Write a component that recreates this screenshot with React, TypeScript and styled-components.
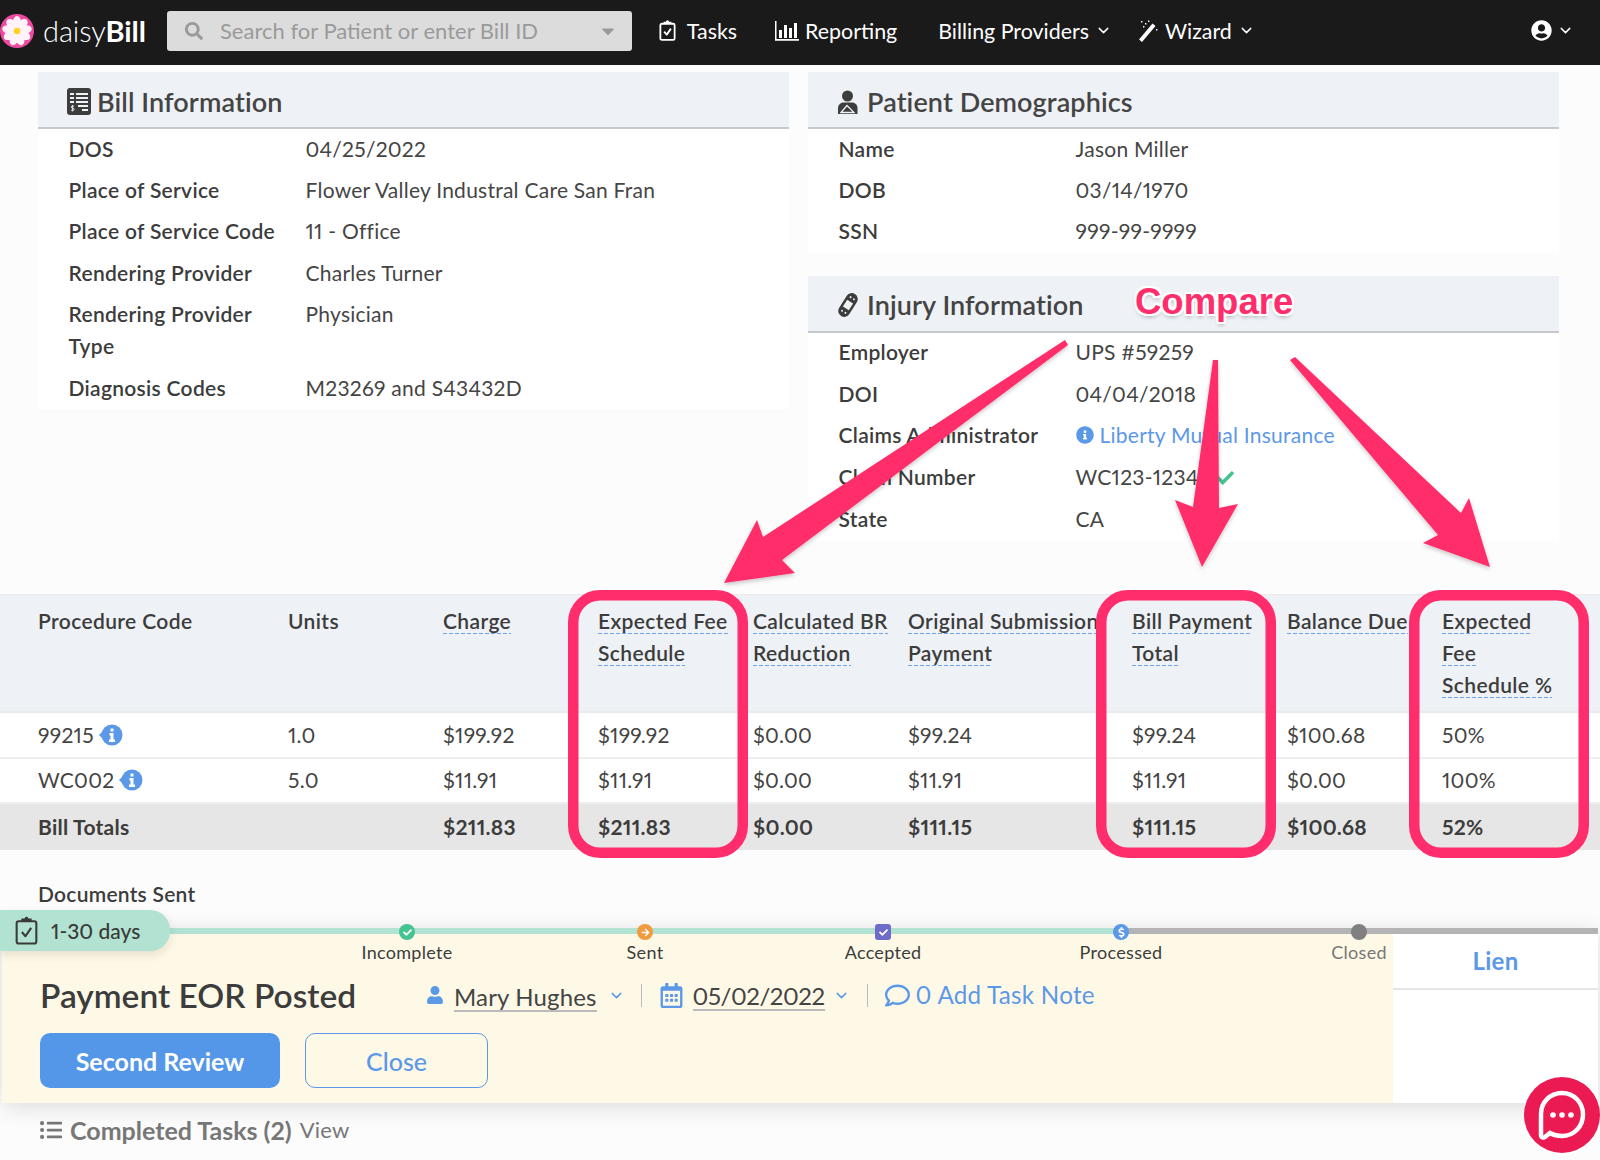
import React from "react";
import styled, { createGlobalStyle } from "styled-components";
import {
  FaInfoCircle, FaCheck, FaUser, FaRegCalendarAlt, FaRegComment, FaListUl, FaSearch,
  FaDollarSign, FaArrowRight, FaUserCircle, FaCaretDown,
} from "react-icons/fa";
import { ChevronDown } from "lucide-react";

const Font = `Lato, "Open Sans", Arial, sans-serif`;
const Pink = "#ff2d6b";
const Blue = "#5b98e8";

const Global = createGlobalStyle`
  html, body { margin: 0; padding: 0; background: #fcfcfc; }
  body { font-family: ${Font}; color: #444; font-variant-numeric: proportional-nums; font-feature-settings: "pnum" 1; }
  * { box-sizing: border-box; }
`;

const Page = styled.div`
  position: relative; width: 1600px; height: 1160px; overflow: hidden; background: #fcfcfc;
  font-size: 21px; line-height: 32px; letter-spacing: .25px;
`;

/* ---------- nav ---------- */
const Nav = styled.header`
  height: 65px; background: #1a1a1a; display: flex; align-items: center; color: #fff; padding-bottom: 3px;
`;
const Brand = styled.div`display: flex; align-items: center; width: 167px; flex: none; gap: 9px; font-size: 29px; letter-spacing: -.1px;`;
const BrandLight = styled.span`font-weight: 300;`;
const BrandBold = styled.span`font-weight: 700;`;
const Search = styled.div`
  width: 465px; height: 40px; background: #dcdcdc; border-radius: 3px; display: flex; align-items: center;
  padding: 0 14px 0 18px; color: #9a9a9a; font-size: 22px; flex: none; letter-spacing: 0;
`;
const SearchText = styled.span`flex: 1; margin-left: 17px;`;
const NavItem = styled.div<{ $left: number }>`
  display: flex; align-items: center; gap: 6px; margin-left: ${p => p.$left}px; font-size: 21.4px; white-space: nowrap; letter-spacing: 0; padding-bottom: 1px;
`;

/* ---------- info panels ---------- */
const InfoGrid = styled.div`
  display: grid; grid-template-columns: 751px 751px; gap: 19px; padding: 7px 0 0 38px; height: 529px; align-items: start;
`;
const Column = styled.div`display: flex; flex-direction: column; gap: 22.5px;`;
const Panel = styled.section`background: #fff;`;
const PanelHead = styled.h2`
  height: 57px; margin: 0; background: #eef1f5; border-bottom: 2px solid #c6c9cc; padding: 4px 0 0 29px;
  display: flex; align-items: center; gap: 6px; font-size: 27px; font-weight: 600; color: #444; letter-spacing: .1px;
`;
const InfoRow = styled.div`display: grid; grid-template-columns: 237px 1fr; padding: 3.7px 0 5.7px 30.5px;`;
const Label = styled.div`font-weight: 600; color: #3c3c3c; padding-right: 12px; letter-spacing: .3px;`;
const Value = styled.div`color: #454545;`;
const LinkValue = styled.a`color: ${Blue}; display: inline-flex; align-items: center; gap: 6px;`;

/* ---------- table ---------- */
const cols = "288px 155px 155px 155px 155px 224px 155px 155px 158px";
const TableHead = styled.div`
  display: grid; grid-template-columns: ${cols}; height: 119px; background: #eef1f5;
  padding-top: 10px; border-bottom: 2px solid #e8eaec; border-top: 1px solid #e8e8e8; font-weight: 600; color: #3c3c3c; letter-spacing: .38px;
`;
const HeadCell = styled.div<{ $w?: number }>`
  padding-right: 12px; max-width: ${p => p.$w ?? 155}px; white-space: normal;
  &:first-child { padding-left: 38px; max-width: none; }
  &:last-child { max-width: 126px; padding-right: 0; }
`;
const Dashed = styled.span`
  padding-bottom: 1px; -webkit-box-decoration-break: clone; box-decoration-break: clone;
  background: linear-gradient(to right, #6fa3ea 4px, transparent 4px) 0 100% / 6px 1.5px repeat-x;
`;
const BodyRow = styled.div<{ $total?: boolean }>`
  display: grid; grid-template-columns: ${cols}; height: ${p => (p.$total ? 46 : 45.5)}px; align-items: center;
  background: ${p => (p.$total ? "#e6e6e6" : "#fff")}; font-weight: ${p => (p.$total ? 700 : 400)};
  border-bottom: ${p => (p.$total ? "none" : "2px solid #eeeeee")}; color: ${p => (p.$total ? "#3c3c3c" : "#444")};
`;
const BodyCell = styled.div`
  display: flex; align-items: center; gap: 5px;
  &:first-child { padding-left: 38px; }
`;

/* ---------- docs + timeline ---------- */
const Docs = styled.div`padding: 28px 0 0 38px; height: 78px; font-weight: 600; color: #3c3c3c;`;
const Card = styled.section`
  position: relative; width: 1596px; margin-left: 2px; box-shadow: 0 4px 22px rgba(0,0,0,.13); background: #fff;
`;
const Track = styled.div`display: flex; height: 6px; background: #b4b4b4;`;
const TrackDone = styled.div`width: 1120px; background: #b2e2d1;`;
const AgeBadge = styled.div`
  position: absolute; left: -2px; top: -18px; width: 170px; height: 41px; background: #b2e2d1; z-index: 3;
  border-radius: 0 20px 20px 0; display: flex; align-items: center; gap: 13px; padding-left: 15px; color: #3a3a3a;
  font-weight: 500; box-shadow: 0 4px 10px rgba(0,0,0,.1); letter-spacing: 0;
`;
const CardBody = styled.div`display: flex; height: 169px;`;
const Yellow = styled.div`width: 1391px; flex: none; background: #fef9e6; padding: 0 0 0 38px;`;
const Steps = styled.div`display: flex; margin: -10px 0 0 248px;`;
const Step = styled.div<{ $muted?: boolean }>`
  width: 238px; flex: none; display: flex; flex-direction: column; align-items: center; font-size: 18px; line-height: 24px;
  color: ${p => (p.$muted ? "#777" : "#3c3c3c")}; position: relative; z-index: 2; letter-spacing: .3px;
`;
const Node = styled.div<{ $c: string; $square?: boolean }>`
  width: 16px; height: 16px; border-radius: ${p => (p.$square ? "3px" : "50%")}; background: ${p => p.$c};
  display: flex; align-items: center; justify-content: center; color: #fff; font-size: 9px;
`;
const TitleRow = styled.div`display: flex; align-items: center; height: 40px; margin-top: 11px;`;
const Title = styled.h1`margin: 0; font-size: 33.5px; font-weight: 600; color: #3c3c3c; width: 386px; flex: none; letter-spacing: 0;`;
const Owner = styled.span`
  font-size: 24px; color: #444; border-bottom: 2px solid #bbb; line-height: 27px; margin: 4px 11px 0 10px; letter-spacing: .15px;
`;
const DateText = styled(Owner)`letter-spacing: -.45px; margin: 3px 8px 0 9px;`;
const Divider = styled.span<{ $after?: number }>`
  width: 1px; height: 23px; background: #bbb; margin: 0 17px 0 ${p => p.$after ?? 16}px;
`;
const Note = styled.span`font-size: 24.2px; color: ${Blue}; margin-left: 6px;`;
const ButtonRow = styled.div`display: flex; gap: 25px; margin-top: 18px;`;
const Primary = styled.button`
  width: 240px; height: 55px; border: 0; border-radius: 10px; background: #5497e8; color: #fff;
  font: 700 25px ${Font};
`;
const Secondary = styled.button`
  width: 183px; height: 55px; border: 1.5px solid ${Blue}; border-radius: 10px; background: transparent; color: ${Blue};
  font: 500 25px ${Font};
`;
const Aside = styled.div`flex: 1; background: #fff;`;
const TabLabel = styled.div`
  height: 56px; border-bottom: 2px solid #e5e5e5; display: flex; align-items: center; justify-content: center;
  color: ${Blue}; font-weight: 700; font-size: 24px;
`;
const Completed = styled.div`
  display: flex; align-items: center; padding: 11px 0 0 40px; color: #777; gap: 8px; font-size: 22px;
`;
const CompletedTitle = styled.b`font-size: 25px; font-weight: 700; letter-spacing: 0;`;

/* ---------- overlays ---------- */
const Annotations = styled.svg`position: absolute; inset: 0; z-index: 5; pointer-events: none;`;
const Compare = styled.div`
  position: absolute; left: 1135px; top: 280px; z-index: 6; font: 700 36.5px/44px "Liberation Sans", Arial, sans-serif; letter-spacing: 0;
  color: ${Pink}; text-shadow: -2px 0 #fff, 2px 0 #fff, 0 -2px #fff, 0 2px #fff, -2px -2px #fff, 2px 2px #fff, 2px -2px #fff, -2px 2px #fff, 0 3px 4px rgba(0,0,0,.3);
`;
const Chat = styled.div`
  position: absolute; left: 1524px; top: 1077px; width: 76px; height: 76px; border-radius: 50%;
  background: #ec1a52; z-index: 7; display: flex; align-items: center; justify-content: center;
`;

/* ---------- drawn icons ---------- */
const Daisy = () => (
  <svg width="34" height="34" viewBox="0 0 34 34" style={{ flex: "none" }}>
    <circle cx="17" cy="17" r="17" fill="#ee4aa0" />
    {[0, 40, 80, 120, 160, 200, 240, 280, 320].map(a => (
      <ellipse key={a} cx="17" cy="8.5" rx="4.2" ry="6.4" fill="#fff2f8" transform={`rotate(${a} 17 17)`} />
    ))}
    <circle cx="17" cy="17" r="3.2" fill="#ffd21f" />
  </svg>
);
const BillIcon = () => (
  <svg width="24" height="27" viewBox="0 0 24 27">
    <rect width="24" height="27" rx="3" fill="#3d3d3d" />
    <path d="M3 5h4v2H3zM9 5h12v2H9zM3 9h4v2H3zM9 9h12v2H9zM3 13h4v2H3zM9 13h12v2H9zM11 17h10v2H11zM15 21h6v2h-6z" fill="#eef1f5" />
    <path d="M7 18.4c-.6-.6-2.8-.7-2.8.6 0 1.5 3 .8 3 2.4 0 1.3-2.3 1.3-3.2.6M5.6 17v6.4" stroke="#eef1f5" strokeWidth=".9" fill="none" />
  </svg>
);
const SlingUser = () => (
  <svg width="20" height="24" viewBox="0 0 20 24" style={{ marginRight: 3, marginLeft: 1 }}>
    <circle cx="9.5" cy="6" r="5.5" fill="#3d3d3d" />
    <path d="M0 24v-6c0-3.5 3-5.5 6-5.5h7c4 0 6.5 2 6.5 5.5v6z" fill="#3d3d3d" />
    <path d="M3 22.5 9 15.5l7 7z" fill="none" stroke="#eef1f5" strokeWidth="1.3" />
  </svg>
);
const BandAid = () => (
  <svg width="22" height="26" viewBox="0 0 22 26" style={{ marginRight: 2 }}>
    <g transform="rotate(32 11 13)">
      <rect x="5" y="0" width="12" height="26" rx="6" fill="#3d3d3d" />
      <rect x="7.5" y="9" width="7" height="8" fill="#eef1f5" />
      <circle cx="9" cy="5" r="1" fill="#eef1f5" /><circle cx="13" cy="5" r="1" fill="#eef1f5" />
      <circle cx="9" cy="21" r="1" fill="#eef1f5" /><circle cx="13" cy="21" r="1" fill="#eef1f5" />
    </g>
  </svg>
);
const Wand = () => (
  <svg width="22" height="22" viewBox="0 0 20 22" fill="#fff">
    <path d="M1 19.5 14.5 3.500 17.5 6 4 22z" />
    <path d="M3 1h1.400v1.400H3zM7 3h1.400v1.400H7zM5 6h1.400v1.400H5zM10 .5h1.400v1.400H10zM18 9h1.400v1.400H18z" />
  </svg>
);
const ClipCheck = ({ w, h, sw }: { w: number; h: number; sw: number }) => (
  <svg width={w} height={h} viewBox="0 0 22 28" fill="none" stroke="currentColor" strokeWidth={sw} style={{ flex: "none" }}>
    <rect x="1.5" y="5" width="19" height="21.5" rx="2" />
    <path d="M7 5V3.5h3c0-2.500 2-2.500 2 0h3V5" fill="currentColor" />
    <path d="M6.5 15.5 10 19.5l5.5-8" strokeLinejoin="round" />
  </svg>
);
const ReportIcon = () => (
  <svg width="24" height="20" viewBox="0 0 24 20" fill="#fff">
    <path d="M0 0h1.5v18H24v1.7H0z" />
    <path d="M4 9h3v8H4zM9 4h3v13H9zM14 7h3v10h-3zM19 2h3v15h-3z" />
  </svg>
);
const TagInfo = () => (
  <svg width="24" height="22" viewBox="0 0 24 22">
    <circle cx="13" cy="11" r="10.5" fill={Blue} />
    <path d="M0 11 8 3v16z" fill={Blue} />
    <path d="M11.5 4.500h3v3h-3zM10.5 9h4v6.5h1.500V18h-6v-2.500h1.500V11.500h-1z" fill="#fff" />
  </svg>
);
const Bubble = () => (
  <svg width="50" height="52" viewBox="0 0 50 52" fill="none">
    <path d="M25 4C13 4 4 13.5 4 25c0 6 0 17 0 21 0 2.500 2.500 3 4 2l5-4c3.500 2 7.500 3 12 3 12 0 21-9.500 21-21.500S37 4 25 4z" stroke="#fff" strokeWidth="4.5" />
    <circle cx="16" cy="26" r="2.8" fill="#fff" /><circle cx="25" cy="26" r="2.8" fill="#fff" /><circle cx="34" cy="26" r="2.8" fill="#fff" />
  </svg>
);

const rows = [
  ["99215", "1.0", "$199.92", "$199.92", "$0.00", "$99.24", "$99.24", "$100.68", "50%"],
  ["WC002", "5.0", "$11.91", "$11.91", "$0.00", "$11.91", "$11.91", "$0.00", "100%"],
];
const totals = ["Bill Totals", "", "$211.83", "$211.83", "$0.00", "$111.15", "$111.15", "$100.68", "52%"];

const Info = ({ rows: r }: { rows: [string, React.ReactNode][] }) => (
  <>
    {r.map(([k, v]) => (
      <InfoRow key={k}><Label>{k}</Label><Value>{v}</Value></InfoRow>
    ))}
  </>
);

const frames = [568, 1096, 1409];
const arrows = [
  "1065,340 1068,345 782,560 795,573 724,583 757,520 763,537",
  "1213,360 1218,360 1219,508 1238,504 1202,567 1175,500 1193,507",
  "1290,360 1295,357 1461,513 1469,498 1490,567 1423,543 1438,535",
];

export default function App() {
  return (
    <Page>
      <Global />
      <Nav>
        <Brand><Daisy /><span><BrandLight>daisy</BrandLight><BrandBold>Bill</BrandBold></span></Brand>
        <Search>
          <FaSearch size={18} />
          <SearchText>Search for Patient or enter Bill ID</SearchText>
          <FaCaretDown size={20} />
        </Search>
        <NavItem $left={27}><ClipCheck w={17} h={21} sw={2.4} />&nbsp;Tasks</NavItem>
        <NavItem $left={38}><ReportIcon />Reporting</NavItem>
        <NavItem $left={41}>Billing Providers<ChevronDown size={17} /></NavItem>
        <NavItem $left={25}><Wand />Wizard<ChevronDown size={17} /></NavItem>
        <NavItem $left={276}><FaUserCircle size={21} /><ChevronDown size={17} style={{ marginLeft: -1 }} /></NavItem>
      </Nav>

      <InfoGrid>
        <Panel>
          <PanelHead><BillIcon />Bill Information</PanelHead>
          <Info rows={[
            ["DOS", "04/25/2022"],
            ["Place of Service", "Flower Valley Industral Care San Fran"],
            ["Place of Service Code", "11 - Office"],
            ["Rendering Provider", "Charles Turner"],
            ["Rendering Provider Type", "Physician"],
            ["Diagnosis Codes", "M23269 and S43432D"],
          ]} />
        </Panel>
        <Column>
          <Panel>
            <PanelHead><SlingUser />Patient Demographics</PanelHead>
            <Info rows={[["Name", "Jason Miller"], ["DOB", "03/14/1970"], ["SSN", "999-99-9999"]]} />
          </Panel>
          <Panel>
            <PanelHead><BandAid />Injury Information</PanelHead>
            <Info rows={[
              ["Employer", "UPS #59259"],
              ["DOI", "04/04/2018"],
              ["Claims Administrator", <LinkValue><FaInfoCircle size={18} />Liberty Mutual Insurance</LinkValue>],
              ["Claim Number", <>WC123-12345 <FaCheck size={18} color="#45c390" style={{ verticalAlign: -2 }} /></>],
              ["State", "CA"],
            ]} />
          </Panel>
        </Column>
      </InfoGrid>

      <TableHead>
        <HeadCell>Procedure Code</HeadCell>
        <HeadCell>Units</HeadCell>
        <HeadCell><Dashed>Charge</Dashed></HeadCell>
        <HeadCell><Dashed>Expected Fee Schedule</Dashed></HeadCell>
        <HeadCell><Dashed>Calculated BR Reduction</Dashed></HeadCell>
        <HeadCell $w={224}><Dashed>Original Submission Payment</Dashed></HeadCell>
        <HeadCell><Dashed>Bill Payment Total</Dashed></HeadCell>
        <HeadCell><Dashed>Balance Due</Dashed></HeadCell>
        <HeadCell><Dashed>Expected Fee Schedule %</Dashed></HeadCell>
      </TableHead>
      {rows.map(r => (
        <BodyRow key={r[0]}>
          {r.map((c, i) => (
            <BodyCell key={i}>{c}{i === 0 && <TagInfo />}</BodyCell>
          ))}
        </BodyRow>
      ))}
      <BodyRow $total>{totals.map((c, i) => <BodyCell key={i}>{c}</BodyCell>)}</BodyRow>

      <Docs>Documents Sent</Docs>
      <Card>
        <AgeBadge><ClipCheck w={23} h={29} sw={2} />1-30 days</AgeBadge>
        <Track><TrackDone /></Track>
        <CardBody>
          <Yellow>
            <Steps>
              <Step><Node $c="#45c390"><FaCheck /></Node>Incomplete</Step>
              <Step><Node $c="#f29a3e"><FaArrowRight /></Node>Sent</Step>
              <Step><Node $c="#6e6bc9" $square><FaCheck /></Node>Accepted</Step>
              <Step><Node $c={Blue}><FaDollarSign size={11} /></Node>Processed</Step>
              <Step $muted><Node $c="#808080" />Closed</Step>
            </Steps>
            <TitleRow>
              <Title>Payment EOR Posted</Title>
              <FaUser size={18} color={Blue} />
              <Owner>Mary Hughes</Owner>
              <ChevronDown size={17} color={Blue} />
              <Divider />
              <FaRegCalendarAlt size={25} color={Blue} />
              <DateText>05/02/2022</DateText>
              <ChevronDown size={17} color={Blue} />
              <Divider $after={17} />
              <FaRegComment size={25} color={Blue} />
              <Note>0 Add Task Note</Note>
            </TitleRow>
            <ButtonRow>
              <Primary>Second Review</Primary>
              <Secondary>Close</Secondary>
            </ButtonRow>
          </Yellow>
          <Aside><TabLabel>Lien</TabLabel></Aside>
        </CardBody>
      </Card>
      <Completed>
        <FaListUl size={22} />
        <CompletedTitle>Completed Tasks (2)</CompletedTitle>
        View
      </Completed>

      <Annotations width="1600" height="1160" viewBox="0 0 1600 1160">
        <defs>
          <filter id="sh" x="-5%" y="-5%" width="110%" height="110%">
            <feDropShadow dx="0" dy="2" stdDeviation="2" floodOpacity=".22" />
          </filter>
        </defs>
        {frames.map(x => (
          <rect key={x} x={x + 5.25} y={595.25} width={169.5} height={257.5} rx={27} fill="none" stroke={Pink} strokeWidth={10.5} />
        ))}
        {arrows.map(a => <polygon key={a} points={a} fill={Pink} filter="url(#sh)" />)}
      </Annotations>
      <Compare>Compare</Compare>
      <Chat><Bubble /></Chat>
    </Page>
  );
}
